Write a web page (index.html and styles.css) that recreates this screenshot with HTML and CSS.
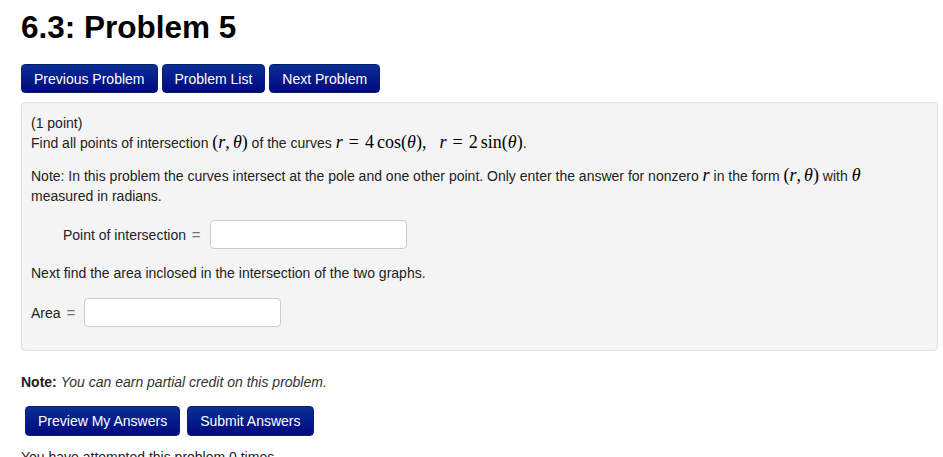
FILE: index.html
```html
<!DOCTYPE html>
<html>
<head>
<meta charset="utf-8">
<link rel="stylesheet" href="styles.css">
</head>
<body>
<div class="page">
  <h1 class="title">6.3: Problem 5</h1>
  <div class="nav">
    <a class="btn">Previous Problem</a>
    <a class="btn">Problem List</a>
    <a class="btn">Next Problem</a>
  </div>
  <div class="problem">
    <div class="line">(1 point)</div>
    <div class="line">Find all points of intersection <span class="m"><span class="mo">(</span><span class="mi">r</span><span class="mo comma">,</span><span class="mi">θ</span><span class="mo">)</span></span> of the curves <span class="m"><span class="mi">r</span><span class="rel">=</span><span class="mn">4</span><span class="fn">cos</span><span class="mo">(</span><span class="mi">θ</span><span class="mo">)</span><span class="mo comma">,</span><span class="qs"></span><span class="mi">r</span><span class="rel">=</span><span class="mn">2</span><span class="fn">sin</span><span class="mo">(</span><span class="mi">θ</span><span class="mo">)</span></span>.</div>
    <div class="para">Note: In this problem the curves intersect at the pole and one other point. Only enter the answer for nonzero <span class="m"><span class="mi">r</span></span> in the form <span class="m"><span class="mo">(</span><span class="mi">r</span><span class="mo comma">,</span><span class="mi">θ</span><span class="mo">)</span></span> with <span class="m"><span class="mi">θ</span></span><br>measured in radians.</div>
    <div class="answer indent">
      <span class="label">Point of intersection <span class="eq">=</span></span>
      <span class="input"></span>
    </div>
    <div class="para2">Next find the area inclosed in the intersection of the two graphs.</div>
    <div class="answer area">
      <span class="label">Area <span class="eq">=</span></span>
      <span class="input"></span>
    </div>
  </div>
  <div class="note"><b>Note:</b> <i>You can earn partial credit on this problem.</i></div>
  <div class="submit">
    <a class="btn btn-lg">Preview My Answers</a>
    <a class="btn btn-lg">Submit Answers</a>
  </div>
  <div class="attempts">You have attempted this problem 0 times.</div>
</div>
</body>
</html>
```

FILE: styles.css
```css
html, body {
  margin: 0;
  padding: 0;
  background: #ffffff;
  overflow: hidden;
}
body {
  font-family: "Liberation Sans", Arial, sans-serif;
  font-size: 14px;
  line-height: 20px;
  color: #222;
}
.page {
  padding: 0 5px 0 21px;
}
.title {
  margin: 0;
  padding-top: 2px;
  font-size: 31.5px;
  line-height: 50px;
  font-weight: bold;
  color: #000;
}
.nav {
  display: flex;
  gap: 4px;
  margin-top: 12px;
}
.btn {
  display: inline-flex;
  align-items: center;
  height: 29px;
  padding: 0 12px;
  box-sizing: border-box;
  font-size: 14px;
  color: #fff;
  border-radius: 4px;
  background: linear-gradient(#0b2e94, #00097f);
  border: 1px solid #051f6e;
  white-space: nowrap;
}
.problem {
  margin-top: 9px;
  background: #f4f4f4;
  border: 1px solid #e2e2e2;
  border-radius: 4px;
  padding: 10px 9px 23px 9px;
}
.line {
  height: 20px;
}
.para {
  margin-top: 13px;
}
.m {
  font-family: "Liberation Serif", "DejaVu Serif", serif;
  font-size: 18px;
  line-height: 18px;
  color: #000;
}
.mi {
  font-style: italic;
}
.mo.comma {
  margin-right: 0.17em;
}
.rel {
  margin: 0 0.34em;
}
.fn {
  margin-left: 0.17em;
}
.qs {
  display: inline-block;
  width: 0.55em;
}
.answer {
  display: flex;
  align-items: center;
  height: 29px;
}
.indent {
  margin-top: 14px;
  padding-left: 32px;
}
.area {
  margin-top: 15px;
}
.label {
  margin-right: 9px;
}
.eq {
  color: #777;
  font-size: 15px;
  margin-left: 2px;
}
.input {
  display: inline-block;
  width: 197px;
  height: 29px;
  box-sizing: border-box;
  background: #fff;
  border: 1px solid #cccccc;
  border-radius: 4px;
}
.para2 {
  margin-top: 14px;
}
.note {
  margin-top: 21px;
  color: #222;
}
.note i {
  color: #333;
}
.submit {
  display: flex;
  gap: 7px;
  margin-top: 14px;
  margin-left: 4px;
}
.btn-lg {
  height: 30px;
  font-size: 14px;
}
.attempts {
  margin-top: 11px;
}
```
